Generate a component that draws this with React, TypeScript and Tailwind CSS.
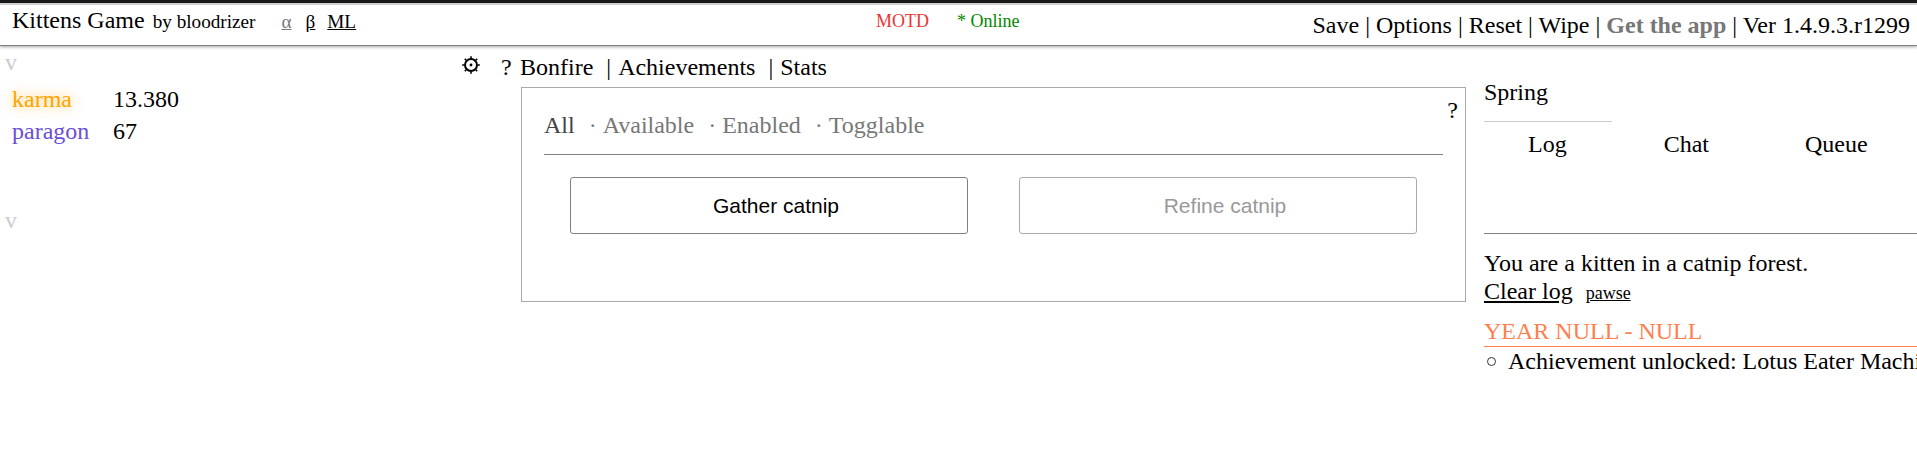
function Gear() {
  return (
    <svg width="20" height="20" viewBox="0 0 20 20" className="block">
      <circle cx="10" cy="10" r="6" fill="none" stroke="#000" strokeWidth="2" />
      <circle cx="10" cy="10" r="1.4" fill="#000" />
      <path d="M10 1.2v2M10 16.8v2M1.2 10h2M16.8 10h2M3.8 3.8l1.4 1.4M14.8 14.8l1.4 1.4M16.2 3.8l-1.4 1.4M5.2 14.8l-1.4 1.4" stroke="#000" strokeWidth="1.6" />
    </svg>
  );
}

function Sep() {
  return <span> | </span>;
}

const tabs = ['Available', 'Enabled', 'Togglable'];

export default function App() {
  return (
    <div className="w-[1917px] h-[462px] overflow-hidden bg-white text-black font-['Liberation_Serif',serif] text-[24px] leading-[28px]">
      {/* top bar */}
      <div className="h-[3px] bg-[#1a1a1a]" />
      <div className="h-[43px] border-t-[2px] border-t-[#cfcfcf] border-b border-b-[#808080] shadow-[0_1px_3px_rgba(0,0,0,0.35)] flex pl-3 pr-[7px]">
        <div className="w-[864px] shrink-0 flex items-baseline pt-px">
          <span>Kittens Game</span>
          <span className="text-[19.2px] ml-[8px]">by bloodrizer</span>
          <a className="text-[19.2px] ml-[26px] underline text-[#777]">α</a>
          <a className="text-[19.2px] ml-[14px] underline">β</a>
          <a className="text-[19.2px] ml-[12px] underline">ML</a>
        </div>
        <div className="flex text-[18px] leading-[22px] pt-[5px]">
          <span className="text-[#e33]">MOTD</span>
          <span className="text-[#080] ml-[28px]">* Online</span>
        </div>
        <div className="ml-auto whitespace-pre pt-[6px]">
          <span>Save</span><Sep /><span>Options</span><Sep /><span>Reset</span><Sep /><span>Wipe</span><Sep />
          <span className="font-bold text-[#777]">Get the app</span><Sep /><span>Ver 1.4.9.3.r1299</span>
        </div>
      </div>

      <div className="flex">
        {/* left column */}
        <div className="w-[521px] shrink-0 relative">
          <div className="pl-[5px] text-[#ccc] mt-[2px]">v</div>
          <div className="pl-3 mt-[9px]">
            <div className="flex h-[32px]">
              <span className="w-[101px] text-[#ffa500] [text-shadow:0_0_12px_rgba(255,165,0,0.7)]">karma</span>
              <span>13.380</span>
            </div>
            <div className="flex h-[31px]">
              <span className="w-[101px] text-[#6a4fd6]">paragon</span>
              <span>67</span>
            </div>
          </div>
          <div className="pl-[5px] text-[#ccc] mt-[58px]">v</div>
          <div className="absolute left-[461px] top-[9px]"><Gear /></div>
          <div className="absolute left-[501px] top-[7px]">?</div>
        </div>

        {/* middle column */}
        <div className="w-[945px] shrink-0">
          <div className="mt-[7px] -ml-px h-[34px] flex">
            <span>Bonfire</span>
            <span className="ml-[13px] mr-[7px]">|</span>
            <span>Achievements</span>
            <span className="ml-[13px] mr-[7px]">|</span>
            <span>Stats</span>
          </div>
          <div className="border border-[#aaa] h-[215px] relative px-[22px]">
            <span className="absolute right-[7px] top-[8px]">?</span>
            <div className="h-[67px] border-b border-[#808080] pt-[23px] text-[#777] flex">
              <span className="text-[#444]">All</span>
              {tabs.map((tab) => (
                <span key={tab} className="flex">
                  <span className="ml-[14px] mr-[6px]">·</span>
                  <span>{tab}</span>
                </span>
              ))}
            </div>
            <div className="flex pt-[22px] pl-[26px] gap-[51px] font-['Liberation_Sans',sans-serif] text-[21px]">
              <button className="w-[398px] h-[57px] border border-[#808080] rounded-[3px] pl-[14px] text-black">Gather catnip</button>
              <button className="w-[398px] h-[57px] border border-[#aaa] rounded-[3px] pl-[14px] text-[#999]">Refine catnip</button>
            </div>
          </div>
        </div>

        {/* right column */}
        <div className="ml-[18px] flex-1 min-w-0 whitespace-nowrap overflow-hidden">
          <div className="mt-[32px] w-[128px] border-b border-[#ccc] h-[44px]">Spring</div>
          <div className="flex mt-[8px] h-[104px] border-b border-[#808080]">
            <span className="ml-[44px]">Log</span>
            <span className="ml-[97px]">Chat</span>
            <span className="ml-[96px]">Queue</span>
          </div>
          <div className="mt-[15px]">You are a kitten in a catnip forest.</div>
          <div className="flex items-baseline">
            <a className="underline">Clear log</a>
            <a className="underline text-[18px] ml-[13px]">pawse</a>
          </div>
          <div className="mt-[10px] text-[#ff7f50] border-b border-[#ff7f50] h-[30px]">YEAR NULL - NULL</div>
          <div className="flex items-center">
            <span className="w-[9px] h-[9px] shrink-0 rounded-full border border-[#333] ml-[3px] mr-[12px]" />
            <span>Achievement unlocked: Lotus Eater Machine</span>
          </div>
        </div>
      </div>
    </div>
  );
}
